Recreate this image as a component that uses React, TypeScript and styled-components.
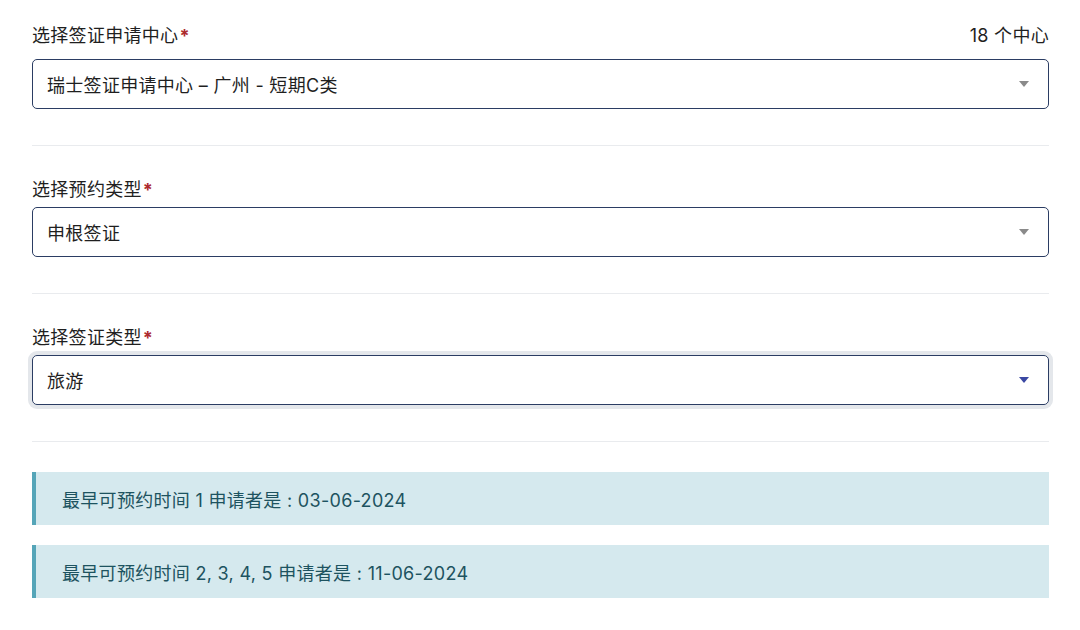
import React from 'react';
import styled, {createGlobalStyle} from 'styled-components';

const GlobalStyle = createGlobalStyle`
  body {
    margin: 0;
    background: #fff;
    font-family: Inter, "Noto Sans CJK SC", sans-serif;
    letter-spacing: 0.3px;
    color: #1f1f1f;
  }
`

const Page = styled.div`
  padding: 22px 31px 0 32px;
`

const Field = styled.div<{ $first?: boolean }>`
  padding: ${p => p.$first ? '0' : '30px'} 0 36px;
  border-bottom: 1px solid #e9ebee;
`

const LabelRow = styled.div<{ $gap: number }>`
  display: flex;
  justify-content: space-between;
  align-items: center;
  height: 24px;
  margin-bottom: ${p => p.$gap}px;
  font-size: 18px;
`

const Label = styled.span`
  color: #1f1f1f;
`

const Required = styled.span`
  color: #ad2a2e;
  font-weight: 700;
  margin-left: 1px;
`

const Hint = styled.span`
  color: #1f1f1f;
`

const Select = styled.div<{ $focused?: boolean }>`
  display: flex;
  align-items: center;
  justify-content: space-between;
  box-sizing: border-box;
  height: 50px;
  padding: 0 19px 0 14px;
  border: 1px solid #2b3d63;
  border-radius: 5px;
  font-size: 18px;
  color: #1f1f1f;
  box-shadow: ${p => p.$focused ? '0 0 0 4px #e4e7eb' : 'none'};
`

const Caret = styled.span<{ $focused?: boolean }>`
  width: 0;
  height: 0;
  border-left: 5px solid transparent;
  border-right: 5px solid transparent;
  border-top: 6px solid ${p => p.$focused ? '#3b48a3' : '#8a8a8a'};
`

const Alerts = styled.div`
  display: flex;
  flex-direction: column;
  gap: 20px;
  margin-top: 30px;
`

const Alert = styled.div`
  display: flex;
  align-items: center;
  height: 53px;
  padding-left: 26px;
  background: #d5e9ee;
  border-left: 4px solid #55a5b8;
  font-size: 18px;
  color: #1d5360;
`

const fields = [
    {label: '选择签证申请中心', value: '瑞士签证申请中心 – 广州 - 短期C类', hint: '18 个中心'},
    {label: '选择预约类型', value: '申根签证'},
    {label: '选择签证类型', value: '旅游', focused: true},
]

const App = () => {
    return (
        <Page>
            <GlobalStyle/>
            {fields.map((field, i) =>
                <Field key={field.label} $first={i === 0}>
                    <LabelRow $gap={i === 0 ? 13 : 7}>
                        <Label>{field.label}<Required>*</Required></Label>
                        {field.hint && <Hint>{field.hint}</Hint>}
                    </LabelRow>
                    <Select $focused={field.focused}>
                        <span>{field.value}</span>
                        <Caret $focused={field.focused}/>
                    </Select>
                </Field>
            )}
            <Alerts>
                <Alert>最早可预约时间 1 申请者是 : 03-06-2024</Alert>
                <Alert>最早可预约时间 2, 3, 4, 5 申请者是 : 11-06-2024</Alert>
            </Alerts>
        </Page>
    );
};

export default App;
